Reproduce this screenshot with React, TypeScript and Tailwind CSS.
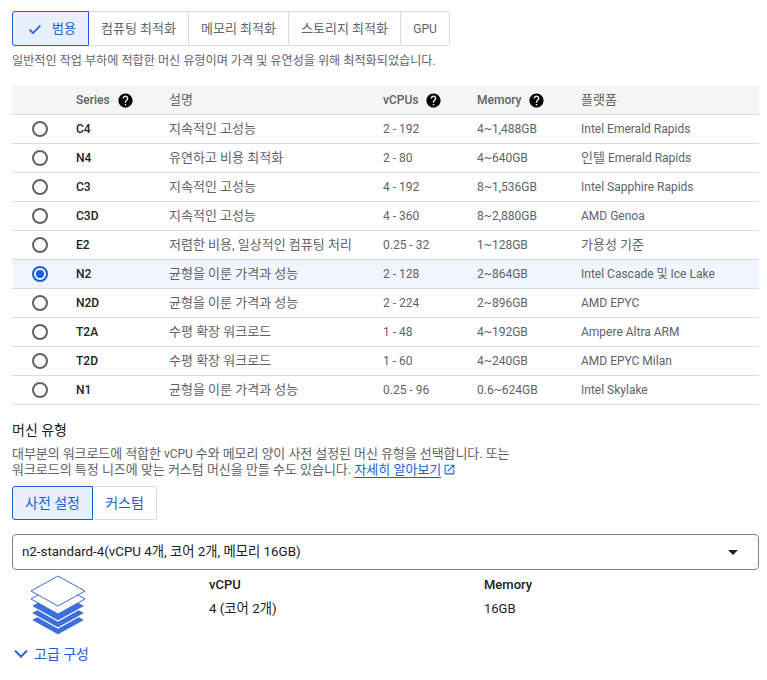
import React from "react";

const rows = [
  ["C4", "지속적인 고성능", "2 - 192", "4~1,488GB", "Intel Emerald Rapids"],
  ["N4", "유연하고 비용 최적화", "2 - 80", "4~640GB", <><span className="text-[13px]">인텔</span> Emerald Rapids</>],
  ["C3", "지속적인 고성능", "4 - 192", "8~1,536GB", "Intel Sapphire Rapids"],
  ["C3D", "지속적인 고성능", "4 - 360", "8~2,880GB", "AMD Genoa"],
  ["E2", "저렴한 비용, 일상적인 컴퓨팅 처리", "0.25 - 32", "1~128GB", <span className="text-[13px]">가용성 기준</span>],
  ["N2", "균형을 이룬 가격과 성능", "2 - 128", "2~864GB", "Intel Cascade 및 Ice Lake"],
  ["N2D", "균형을 이룬 가격과 성능", "2 - 224", "2~896GB", "AMD EPYC"],
  ["T2A", "수평 확장 워크로드", "1 - 48", "4~192GB", "Ampere Altra ARM"],
  ["T2D", "수평 확장 워크로드", "1 - 60", "4~240GB", "AMD EPYC Milan"],
  ["N1", "균형을 이룬 가격과 성능", "0.25 - 96", "0.6~624GB", "Intel Skylake"],
] as const;

function Help() {
  return (
    <svg viewBox="0 0 24 24" className="w-[17px] h-[17px] ml-[7px]" fill="#000">
      <path d="M12 2C6.48 2 2 6.48 2 12s4.48 10 10 10 10-4.48 10-10S17.52 2 12 2zm1 17h-2v-2h2v2zm2.07-7.75l-.9.92C13.45 12.9 13 13.5 13 15h-2v-.5c0-1.1.45-2.1 1.17-2.83l1.24-1.26c.37-.36.59-.86.59-1.41 0-1.1-.9-2-2-2s-2 .9-2 2H8c0-2.21 1.79-4 4-4s4 1.79 4 4c0 .88-.36 1.68-.93 2.25z" />
    </svg>
  );
}

function Radio({ on }: { on: boolean }) {
  return on ? (
    <span className="w-[16px] h-[16px] rounded-full border-2 border-[#1a5fd8] flex items-center justify-center">
      <span className="w-[8px] h-[8px] rounded-full bg-[#1a5fd8]" />
    </span>
  ) : (
    <span className="w-[16px] h-[16px] rounded-full border-2 border-[#5f6368]" />
  );
}

const grid = "grid grid-cols-[64px_93px_214px_94px_104px_1fr] items-center";

export default function App() {
  return (
    <div className="w-[767px] h-[680px] bg-white overflow-hidden px-[12px] pt-[11px] text-[12px] text-[#5f6368] font-['Roboto','Noto_Sans_CJK_KR',sans-serif]">
      <div className="flex w-[438px] h-[35px] text-[13px]">
        <div className="w-[77px] flex items-center justify-center gap-[9px] bg-[#e8f0fe] text-[#1a5fd8] border border-[#1a5fd8] rounded-l-[3px]">
          <svg viewBox="0 0 24 24" className="w-[16px] h-[16px] ml-[2px]" fill="none" stroke="#1a5fd8" strokeWidth="2.6">
            <path d="M4 13l5 5L20 7" />
          </svg>
          <span>범용</span>
        </div>
        <div className="w-[100px] flex items-center justify-center border-y border-r border-[#dadce0]">컴퓨팅 최적화</div>
        <div className="w-[100px] flex items-center justify-center border-y border-r border-[#dadce0]">메모리 최적화</div>
        <div className="w-[112px] flex items-center justify-center border-y border-r border-[#dadce0]">스토리지 최적화</div>
        <div className="w-[49px] flex items-center justify-center border-y border-r border-[#dadce0] rounded-r-[3px] text-[12px]">GPU</div>
      </div>
      <p className="mt-[7px] h-[16px] leading-[16px] text-[12.13px]">
        일반적인 작업 부하에 적합한 머신 유형이며 가격 및 유연성을 위해 최적화되었습니다.
      </p>

      <div className="mt-[17px] w-[747px]">
        <div className={`${grid} h-[29px] bg-[#f5f5f5] border-b border-[#dadce0] font-medium`}>
          <span />
          <span className="flex items-center">Series<Help /></span>
          <span className="text-[13px] font-normal">설명</span>
          <span className="flex items-center">vCPUs<Help /></span>
          <span className="flex items-center">Memory<Help /></span>
          <span className="text-[13px] font-normal">플랫폼</span>
        </div>
        {rows.map((r) => {
          const on = r[0] === "N2";
          return (
            <div key={r[0]} className={`${grid} h-[29px] border-b border-[#dadce0] ${on ? "bg-[#f1f5fd]" : ""}`}>
              <span className="pl-[20px] flex"><Radio on={on} /></span>
              <span className="font-medium text-[#202124]">{r[0]}</span>
              <span className="text-[13px]">{r[1]}</span>
              <span>{r[2]}</span>
              <span>{r[3]}</span>
              <span>{r[4]}</span>
            </div>
          );
        })}
      </div>

      <h3 className="mt-[16px] h-[18px] leading-[18px] text-[14px] text-[#202124]">머신 유형</h3>
      <p className="mt-[7px] h-[30px] leading-[15px] text-[13px] whitespace-nowrap">
        <span className="tracking-[-0.08px]">대부분의 워크로드에 적합한 <span className="text-[12px]">vCPU</span> 수와 메모리 양이 사전 설정된 머신 유형을 선택합니다. 또는</span>
        <br />
        <span className="tracking-[-0.03px]">워크로드의 특정 니즈에 맞는 커스텀 머신을 만들 수도 있습니다.</span>{" "}
        <a className="text-[#1a5fd8] border-b border-[#1a5fd8] text-[13px]">자세히 알아보기</a>
        <svg viewBox="0 0 24 24" className="inline-block w-[13px] h-[13px] ml-[2px] align-[-2px]" fill="#1a5fd8">
          <path d="M19 19H5V5h7V3H5a2 2 0 0 0-2 2v14a2 2 0 0 0 2 2h14c1.1 0 2-.9 2-2v-7h-2v7zM14 3v2h3.59l-9.83 9.83 1.41 1.41L19 6.41V10h2V3h-7z" />
        </svg>
      </p>

      <div className="mt-[10px] flex h-[34px] w-[145px] text-[14px] text-[#1a5fd8]">
        <div className="w-[81px] flex items-center justify-center bg-[#e8f0fe] border border-[#1a5fd8] rounded-l-[3px]">사전 설정</div>
        <div className="flex-1 flex items-center justify-center border-y border-r border-[#dadce0] rounded-r-[3px]">커스텀</div>
      </div>

      <div className="mt-[14px] w-[747px] h-[36px] border border-[#80868b] rounded-[4px] flex items-center justify-between pl-[9px] pr-[20px] text-[13.33px] text-[#202124]">
        <span>n2-standard-4(vCPU 4개, 코어 2개, 메모리 16GB)</span>
        <span className="w-0 h-0 border-x-[5px] border-x-transparent border-t-[5px] border-t-[#202124]" />
      </div>

      <div className="flex h-[66px] text-[13px] text-[#202124]">
        <div className="w-[197px] pl-[17px] pt-[5px]">
          <svg viewBox="0 0 58 62" className="w-[58px] h-[62px]">
            {[45, 38, 31].map((y) => (
              <path key={y} d={`M29 ${y - 15} L56 ${y} L29 ${y + 15} L2 ${y} Z`} fill="#3b6fdc" stroke="#fff" strokeWidth="1.2" />
            ))}
            <path d="M29 9 L56 24 L29 39 L2 24 Z" fill="#fff" stroke="#3b6fdc" strokeWidth="1" />
            <path d="M29 1 L56 16 L29 31 L2 16 Z" fill="#fff" stroke="#3b6fdc" strokeWidth="1" />
          </svg>
        </div>
        <div className="w-[275px] pt-[7px]">
          <div className="font-medium h-[16px] leading-[16px]">vCPU</div>
          <div className="mt-[8px] h-[16px] leading-[16px] text-[13.33px]">4 (코어 2개)</div>
        </div>
        <div className="pt-[7px]">
          <div className="font-medium h-[16px] leading-[16px]">Memory</div>
          <div className="mt-[8px] h-[16px] leading-[16px]">16GB</div>
        </div>
      </div>

      <div className="mt-[9px] flex items-center text-[#1a5fd8] text-[14px] h-[18px]">
        <svg viewBox="0 0 24 24" className="w-[16px] h-[16px] mr-[5px] ml-[1px]" fill="none" stroke="#1a5fd8" strokeWidth="3">
          <path d="M3 7l9 9 9-9" />
        </svg>
        고급 구성
      </div>
    </div>
  );
}
